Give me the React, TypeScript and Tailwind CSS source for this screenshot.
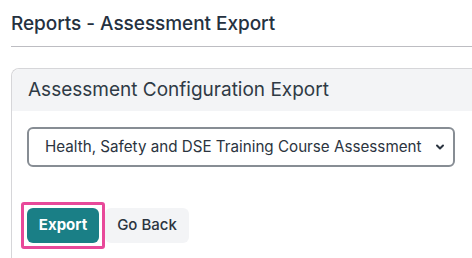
import { ChevronDown } from 'lucide-react'

export default function App() {
  return (
    <div className="min-h-screen overflow-hidden bg-white font-['Inter',sans-serif] text-[#2b3440]">
      <div className="pl-[11px]">
        <h1 className="pt-[14px] pb-[12px] text-[19px] font-medium leading-[20px] tracking-[-0.05px] text-[#25313f]">
          Reports - Assessment Export
        </h1>
        <div className="h-px bg-[#bdbdc2]" />

        <div className="mt-[21px] w-[480px] rounded-tl-lg border border-r-0 border-[#d6d6d9]">
          <div className="h-[42px] rounded-tl-lg bg-[#f3f4f6] pl-[16px] pt-[10px] text-[19px] leading-[22px] text-[#2f3a45]">
            Assessment Configuration Export
          </div>
          <div className="pl-[15px] pt-[16px] pb-[16px]">
            <div className="relative w-[428px]">
              <select
                defaultValue="hs"
                className="h-[40px] w-full appearance-none rounded-md border-2 border-[#878d94] bg-white pl-[16px] text-[15.2px] text-[#2b3440] outline-none"
              >
                <option value="hs">Health, Safety and DSE Training Course Assessment</option>
              </select>
              <ChevronDown
                className="pointer-events-none absolute right-[9px] top-[14px] h-[12px] w-[12px] text-[#2b3440]"
                strokeWidth={4}
              />
            </div>

            <div className="mt-[41px] flex items-center">
              <div className="-my-[6px] -ml-[6px] rounded-[3px] border-[3px] border-[#e8499a] p-[3px]">
                <button className="h-[35px] w-[72px] rounded-md bg-[#1a7f86] text-[15px] font-bold text-white">
                  Export
                </button>
              </div>
              <button className="h-[35px] w-[84px] rounded-md bg-[#f3f4f6] text-[15px] font-medium text-[#2b3440]">
                Go Back
              </button>
            </div>
          </div>
        </div>
      </div>
    </div>
  )
}
